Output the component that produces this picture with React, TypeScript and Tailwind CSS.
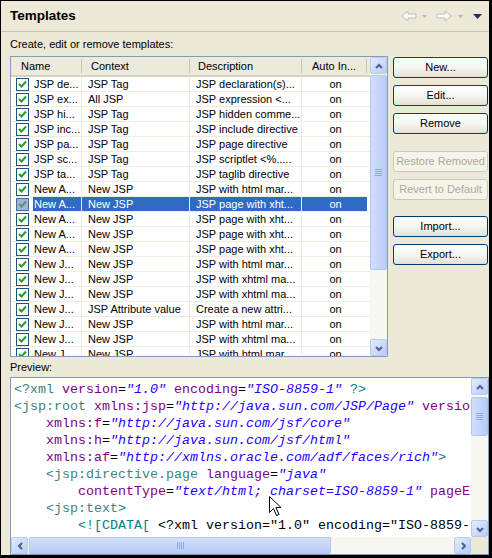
import React from "react";

const rows: [string, string, string][] = [
  ["JSP de...", "JSP Tag", "JSP declaration(s)..."],
  ["JSP ex...", "All JSP", "JSP expression <..."],
  ["JSP hi...", "JSP Tag", "JSP hidden comme..."],
  ["JSP inc...", "JSP Tag", "JSP include directive"],
  ["JSP pa...", "JSP Tag", "JSP page directive"],
  ["JSP sc...", "JSP Tag", "JSP scriptlet <%....."],
  ["JSP ta...", "JSP Tag", "JSP taglib directive"],
  ["New A...", "New JSP", "JSP with html mar..."],
  ["New A...", "New JSP", "JSP page with xht..."],
  ["New A...", "New JSP", "JSP page with xht..."],
  ["New A...", "New JSP", "JSP page with xht..."],
  ["New A...", "New JSP", "JSP page with xht..."],
  ["New J...", "New JSP", "JSP with html mar..."],
  ["New J...", "New JSP", "JSP with xhtml ma..."],
  ["New J...", "New JSP", "JSP with xhtml ma..."],
  ["New J...", "JSP Attribute value", "Create a new attri..."],
  ["New J...", "New JSP", "JSP with html mar..."],
  ["New J...", "New JSP", "JSP with xhtml ma..."],
  ["New J...", "New JSP", "JSP with html mar..."],
];

const T = "text-[#3f7f7f]";
const A = "text-[#7f007f]";
const V = "text-[#2a00ff] italic";
const D = "text-[#008080]";
const K = "text-black";

const code: [string, string][][] = [
  [[T, "<?xml"], [A, " version"], [K, "="], [V, '"1.0"'], [A, " encoding"], [K, "="], [V, '"ISO-8859-1"'], [D, " ?>"]],
  [[T, "<jsp:root"], [A, " xmlns:jsp"], [K, "="], [V, '"http://java.sun.com/JSP/Page"'], [A, " version"], [K, "="], [V, '"2.1"']],
  [[K, "    "], [A, "xmlns:f"], [K, "="], [V, '"http://java.sun.com/jsf/core"']],
  [[K, "    "], [A, "xmlns:h"], [K, "="], [V, '"http://java.sun.com/jsf/html"']],
  [[K, "    "], [A, "xmlns:af"], [K, "="], [V, '"http://xmlns.oracle.com/adf/faces/rich"'], [D, ">"]],
  [[K, "    "], [T, "<jsp:directive.page"], [A, " language"], [K, "="], [V, '"java"']],
  [[K, "        "], [A, "contentType"], [K, "="], [V, '"text/html; charset=ISO-8859-1"'], [A, " pageEncoding"], [K, "="], [V, '"ISO-8859-1"']],
  [[K, "    "], [T, "<jsp:text"], [D, ">"]],
  [[K, "        "], [D, "<![CDATA["], [K, ' <?xml version="1.0" encoding="ISO-8859-1" ?>']],
];

function Check({ dim }: { dim?: boolean }) {
  return (
    <div
      className={
        "w-[13px] h-[13px] border flex items-center justify-center " +
        (dim ? "border-[#4a6a9a] bg-[#9fb4d8]" : "border-[#1c5180] bg-white")
      }
    >
      <svg width="9" height="9" viewBox="0 0 9 9">
        <path d="M1 4 L3.5 6.5 L8 1.5" fill="none" stroke={dim ? "#5f8f6f" : "#21a121"} strokeWidth="2" />
      </svg>
    </div>
  );
}

function Chevron({ dir }: { dir: "up" | "down" | "left" | "right" }) {
  const pts =
    dir === "up"
      ? "2,7 5,4 8,7"
      : dir === "down"
      ? "2,4 5,7 8,4"
      : dir === "left"
      ? "7,2 4,5 7,8"
      : "4,2 7,5 4,8";
  return (
    <svg width="10" height="10" viewBox="0 0 10 10">
      <polyline points={pts} fill="none" stroke="#4d6185" strokeWidth="2" />
    </svg>
  );
}

function SbButton({ dir }: { dir: "up" | "down" | "left" | "right" }) {
  return (
    <div className="w-[17px] h-[17px] shrink-0 rounded-[2px] border border-[#b9c9ef] bg-linear-to-br from-[#e3ebfe] to-[#b9cdf7] flex items-center justify-center">
      <Chevron dir={dir} />
    </div>
  );
}

function Grip({ vertical }: { vertical: boolean }) {
  return vertical ? (
    <div className="flex flex-col gap-[1px]">
      {[0, 1, 2, 3].map((i) => (
        <div key={i} className="w-[7px] h-[1px] bg-[#8ea8e6]" />
      ))}
    </div>
  ) : (
    <div className="flex flex-row gap-[1px]">
      {[0, 1, 2, 3].map((i) => (
        <div key={i} className="h-[7px] w-[1px] bg-[#8ea8e6]" />
      ))}
    </div>
  );
}

function Btn({ label, disabled, className }: { label: string; disabled?: boolean; className?: string }) {
  return (
    <div
      className={
        "h-[21px] shrink-0 rounded-[3px] border flex items-center justify-center text-[11px] " +
        (disabled
          ? "border-[#c9c7ba] bg-[#f5f4ea] text-[#aca899] "
          : "border-[#003c74] bg-linear-to-b from-white via-[#f6f5f0] to-[#e3e1d6] text-black ") +
        (className || "")
      }
    >
      {label}
    </div>
  );
}

export default function App() {
  return (
    <div
      className="relative w-[492px] h-[558px] box-border bg-[#ece9d8] border-t border-l border-r-[3px] border-b-[3px] border-black flex flex-col text-black overflow-hidden"
      style={{ fontFamily: '"Liberation Sans", Arial, sans-serif' }}
    >
      {/* Header */}
      <div className="h-[31px] shrink-0 border-b border-[#c7c3b1] flex items-center pl-[9px] pr-[7px]">
        <span className="font-bold text-[13.5px]">Templates</span>
        <div className="ml-auto flex items-center">
          <svg width="16" height="12" viewBox="0 0 16 12">
            <path d="M1 6 L7 1 L7 4 L15 4 L15 8 L7 8 L7 11 Z" fill="#fafaf7" stroke="#bdbdb6" />
          </svg>
          <svg width="5" height="3" viewBox="0 0 5 3" className="ml-[5px]">
            <polygon points="0,0 5,0 2.5,3" fill="#b5b5ae" />
          </svg>
          <svg width="16" height="12" viewBox="0 0 16 12" className="ml-[9px]">
            <path d="M15 6 L9 1 L9 4 L1 4 L1 8 L9 8 L9 11 Z" fill="#fafaf7" stroke="#bdbdb6" />
          </svg>
          <svg width="5" height="3" viewBox="0 0 5 3" className="ml-[6px]">
            <polygon points="0,0 5,0 2.5,3" fill="#b5b5ae" />
          </svg>
          <svg width="9" height="5" viewBox="0 0 9 5" className="ml-[10px]">
            <polygon points="0,0 9,0 4.5,5" fill="#2b2b5e" />
          </svg>
        </div>
      </div>

      {/* Label */}
      <div className="h-[24px] shrink-0 flex items-center pl-[9px] text-[11px]">Create, edit or remove templates:</div>

      {/* Main */}
      <div className="h-[301px] shrink-0 flex pl-[9px]">
        <div className="w-[378px] h-full border border-[#7f9db9] bg-white flex">
          <div className="w-[359px] flex flex-col overflow-hidden">
            {/* Column header */}
            <div className="h-[20px] shrink-0 flex bg-[#ebeadb] border-b-2 border-[#d6d2c2] text-[11px]">
              <div className="w-[71px] flex items-center">
                <span className="flex-1 pl-[10px]">Name</span>
                <span className="w-px h-[14px] bg-[#c7c5b2]" />
              </div>
              <div className="w-[108px] flex items-center">
                <span className="flex-1 pl-[9px]">Context</span>
                <span className="w-px h-[14px] bg-[#c7c5b2]" />
              </div>
              <div className="w-[112px] flex items-center">
                <span className="flex-1 pl-[8px]">Description</span>
                <span className="w-px h-[14px] bg-[#c7c5b2]" />
              </div>
              <div className="w-[65px] flex items-center">
                <span className="flex-1 text-center">Auto In...</span>
                <span className="w-px h-[14px] bg-[#c7c5b2]" />
              </div>
            </div>
            {/* Rows */}
            <div className="flex-1 overflow-hidden flex flex-col text-[11px]">
              {rows.map((r, i) => {
                const sel = i === 8;
                const cellSel = sel ? "bg-[#316ac5] text-white" : "";
                return (
                  <div key={i} className="h-[15px] shrink-0 flex border-b border-[#efece0]">
                    <div className="w-[71px] flex border-r border-[#efece0]">
                      <div className="w-[22px] shrink-0 pl-[5px] flex items-center">
                        <Check dim={sel} />
                      </div>
                      <div className={"flex-1 flex items-center pl-[1px] whitespace-nowrap overflow-hidden " + cellSel}>
                        {r[0]}
                      </div>
                    </div>
                    <div className={"w-[108px] flex items-center pl-[6px] whitespace-nowrap overflow-hidden border-r border-[#efece0] " + cellSel}>
                      {r[1]}
                    </div>
                    <div className={"w-[112px] flex items-center pl-[6px] whitespace-nowrap overflow-hidden border-r border-[#efece0] " + cellSel}>
                      {r[2]}
                    </div>
                    <div className={"w-[65px] flex items-center justify-center pl-[2px] " + cellSel}>on</div>
                  </div>
                );
              })}
            </div>
          </div>
          {/* Vertical scrollbar */}
          <div className="w-[17px] h-full flex flex-col bg-[#f7f6f1]">
            <SbButton dir="up" />
            <div className="h-[195px] shrink-0 mt-[1px] rounded-[2px] border border-[#b1c5f3] bg-linear-to-r from-[#d2defc] to-[#b9ccf7] flex items-center justify-center">
              <Grip vertical />
            </div>
            <div className="flex-1" />
            <SbButton dir="down" />
          </div>
        </div>

        {/* Buttons */}
        <div className="w-[95px] ml-[5px] flex flex-col pt-[1px]">
          <Btn label="New..." />
          <Btn label="Edit..." className="mt-[7px]" />
          <Btn label="Remove" className="mt-[7px]" />
          <Btn label="Restore Removed" disabled className="mt-[17px]" />
          <Btn label="Revert to Default" disabled className="mt-[7px]" />
          <Btn label="Import..." className="mt-[16px]" />
          <Btn label="Export..." className="mt-[7px]" />
        </div>
      </div>

      {/* Preview label */}
      <div className="h-[20px] shrink-0 flex items-center pl-[9px] text-[11px]">Preview:</div>

      {/* Preview box */}
      <div className="flex-1 ml-[9px] w-[479px] border border-[#7f9db9] bg-white flex flex-col min-h-0">
        <div className="flex-1 flex min-h-0">
          <div
            className="flex-1 overflow-hidden pl-[3px] pt-[3px] text-[13.333px] leading-[17px] whitespace-pre"
            style={{ fontFamily: '"Liberation Mono", "Courier New", monospace' }}
          >
            {code.map((line, i) => (
              <div key={i} className="h-[17px]">
                {line.map(([c, t], j) => (
                  <span key={j} className={c}>
                    {t}
                  </span>
                ))}
              </div>
            ))}
          </div>
          <div className="w-[17px] flex flex-col bg-[#f7f6f1]">
            <SbButton dir="up" />
            <div className="h-[39px] shrink-0 mt-[2px] rounded-[2px] border border-[#b1c5f3] bg-linear-to-r from-[#d2defc] to-[#b9ccf7] flex items-center justify-center">
              <Grip vertical />
            </div>
            <div className="flex-1" />
            <SbButton dir="down" />
          </div>
        </div>
        <div className="h-[17px] shrink-0 flex">
          <div className="flex-1 flex bg-[#f7f6f1]">
            <SbButton dir="left" />
            <div className="w-[302px] shrink-0 ml-[1px] rounded-[2px] border border-[#b1c5f3] bg-linear-to-b from-[#d2defc] to-[#b9ccf7] flex items-center justify-center">
              <Grip vertical={false} />
            </div>
            <div className="flex-1" />
            <SbButton dir="right" />
          </div>
          <div className="w-[17px] bg-[#ece9d8]" />
        </div>
      </div>

      {/* Mouse cursor */}
      <svg className="absolute left-[268px] top-[495px]" width="13" height="21" viewBox="0 0 13 21">
        <path d="M0.5 0.5 L0.5 16.5 L4.5 12.5 L7.5 19.5 L10 18.5 L7 11.5 L12 11.5 Z" fill="white" stroke="black" strokeWidth="1" />
      </svg>
    </div>
  );
}
